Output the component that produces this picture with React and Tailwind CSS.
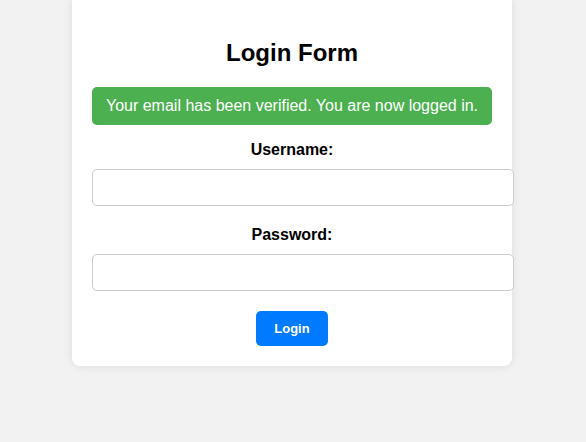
export default function App() {
  return (
    <div className="min-h-screen bg-[#f2f2f2] font-['Liberation_Sans',Arial,sans-serif]">
      <div className="ml-[72px] w-[440px] rounded-b-[8px] bg-white px-[20px] pt-[20px] pb-[20px] shadow-[0_0_10px_rgba(0,0,0,0.1)]">
        <h2 className="mt-[19px] mb-[20px] text-center text-[24px] font-bold leading-[28px] text-black">
          Login Form
        </h2>
        <div className="mb-[16px] rounded-[5px] bg-[#4caf50] py-[10px] text-center text-[16px] leading-[18px] text-white">
          Your email has been verified. You are now logged in.
        </div>
        <form onSubmit={(e) => e.preventDefault()}>
          <label className="mb-[10px] block text-center text-[16px] font-bold leading-[18px] text-black">
            Username:
          </label>
          <input
            type="text"
            className="mb-[20px] block h-[37px] w-[422px] rounded-[5px] border border-[#cccccc] bg-white px-[10px] text-[13px] outline-none"
          />
          <label className="mb-[10px] block text-center text-[16px] font-bold leading-[18px] text-black">
            Password:
          </label>
          <input
            type="password"
            className="mb-[20px] block h-[37px] w-[422px] rounded-[5px] border border-[#cccccc] bg-white px-[10px] text-[13px] outline-none"
          />
          <div className="flex justify-center">
            <button
              type="submit"
              className="h-[35px] w-[72px] rounded-[5px] bg-[#007bff] text-[13px] font-bold text-white"
            >
              Login
            </button>
          </div>
        </form>
      </div>
    </div>
  );
}
